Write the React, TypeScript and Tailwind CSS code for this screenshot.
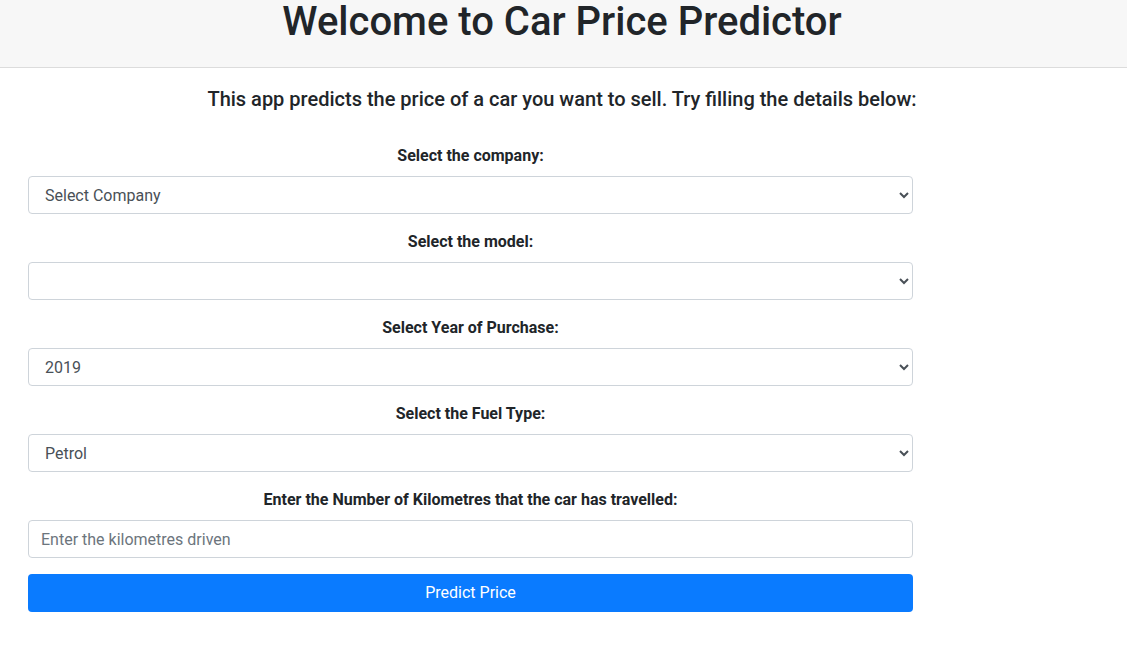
import React from 'react';

const font = { fontFamily: 'Roboto, "Liberation Sans", sans-serif' };

const Field: React.FC<{ label: string; children: React.ReactNode }> = ({ label, children }) => (
  <div className="mb-4">
    <label className="block text-center font-bold text-base leading-6 mb-2 text-[#212529]">{label}</label>
    {children}
  </div>
);

const selectCls =
  'block w-full h-[38px] px-3 text-base text-[#495057] bg-white border border-[#ced4da] rounded-[4px] outline-none';

export default function App() {
  return (
    <div style={font} className="min-h-screen bg-white text-[#212529]">
      <header className="bg-[#f7f7f7] border-b border-[#dcdcdc] h-[68px] pr-[3px]">
        <h1 className="text-center text-[40px] leading-[44px] font-medium">Welcome to Car Price Predictor</h1>
      </header>

      <h5 className="mt-[19px] pr-[3px] text-center text-[20px] leading-6 font-medium">
        This app predicts the price of a car you want to sell. Try filling the details below:
      </h5>

      <form className="ml-[28px] w-[885px] mt-[33px]" onSubmit={(e) => e.preventDefault()}>
        <Field label="Select the company:">
          <select className={selectCls} defaultValue="">
            <option value="">Select Company</option>
          </select>
        </Field>
        <Field label="Select the model:">
          <select className={selectCls}></select>
        </Field>
        <Field label="Select Year of Purchase:">
          <select className={selectCls} defaultValue="2019">
            <option>2019</option>
            <option>2018</option>
          </select>
        </Field>
        <Field label="Select the Fuel Type:">
          <select className={selectCls} defaultValue="Petrol">
            <option>Petrol</option>
            <option>Diesel</option>
          </select>
        </Field>
        <Field label="Enter the Number of Kilometres that the car has travelled:">
          <input
            type="text"
            placeholder="Enter the kilometres driven"
            className="block w-full h-[38px] px-3 text-base text-[#495057] bg-white border border-[#ced4da] rounded-[4px] outline-none placeholder:text-[#6c757d]"
          />
        </Field>
        <button type="submit" className="block w-full h-[38px] bg-[#0a7bff] text-white text-base rounded-[4px]">
          Predict Price
        </button>
      </form>
    </div>
  );
}
